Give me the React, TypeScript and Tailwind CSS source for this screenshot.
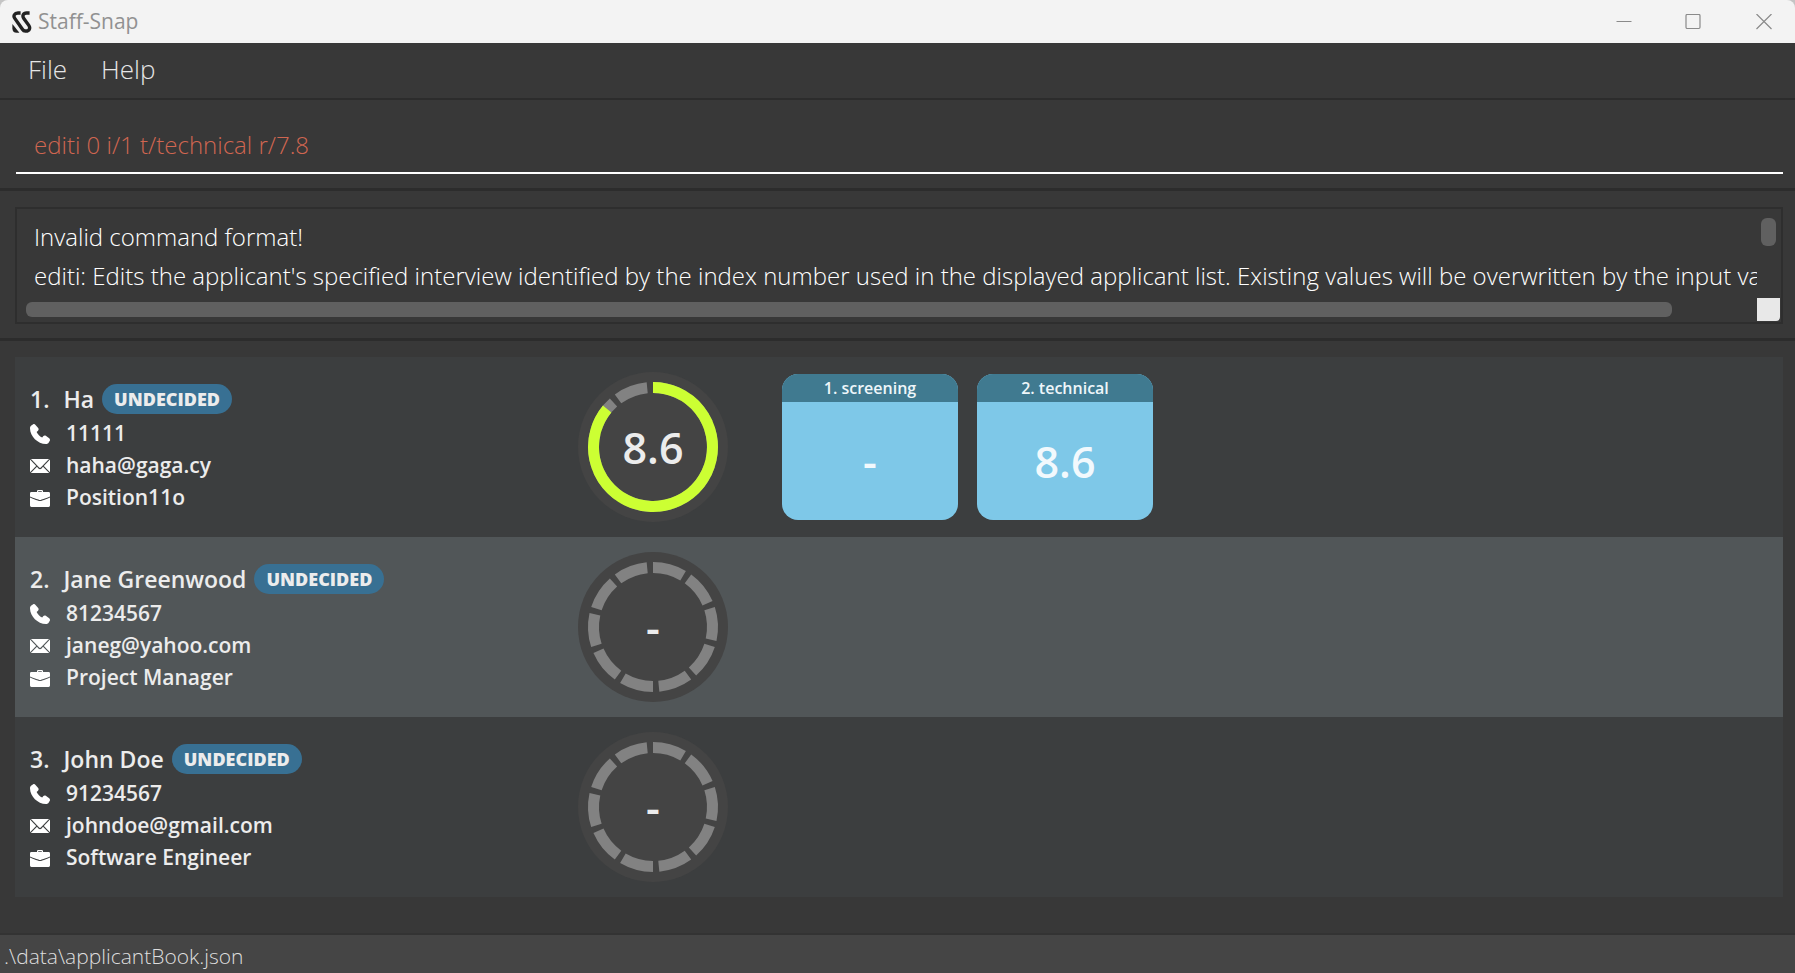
import React from "react";

type Interview = { label: string; rating: string };

type Applicant = {
  name: string;
  phone: string;
  email: string;
  position: string;
  status: string;
  score: number | null;
  interviews: Interview[];
};

const applicants: Applicant[] = [
  {
    name: "Ha",
    phone: "11111",
    email: "haha@gaga.cy",
    position: "Position11o",
    status: "UNDECIDED",
    score: 8.6,
    interviews: [
      { label: "1. screening", rating: "-" },
      { label: "2. technical", rating: "8.6" },
    ],
  },
  {
    name: "Jane Greenwood",
    phone: "81234567",
    email: "janeg@yahoo.com",
    position: "Project Manager",
    status: "UNDECIDED",
    score: null,
    interviews: [],
  },
  {
    name: "John Doe",
    phone: "91234567",
    email: "johndoe@gmail.com",
    position: "Software Engineer",
    status: "UNDECIDED",
    score: null,
    interviews: [],
  },
];

const feedback = [
  "Invalid command format!",
  "editi: Edits the applicant's specified interview identified by the index number used in the displayed applicant list. Existing values will be overwritten by the input values.",
].join("\n");

function Logo() {
  return (
    <svg viewBox="0 0 20 22" className="h-[22px] w-5" fill="none" stroke="#222222" aria-hidden="true">
      <path
        strokeWidth="3.4"
        d="M8.6 2H6C2.4 2 1 4.8 2.8 7.4L10.4 18.2C11.2 19.4 12 20 13.2 20H14C17.4 20 18.6 17 16.8 14.4L11.8 7.4C10 4.8 11.2 2 14.6 2H17.6"
      />
      <path d="M0.4 13L7.4 21.8H4.6C2 21.8 0.4 20 0.4 17.4Z" fill="#222222" stroke="none" />
    </svg>
  );
}

function TitleBar() {
  return (
    <header className="bg-[#c4c4c4]">
      <div className="flex h-[43px] items-center rounded-t-lg bg-[#f3f3f3] pl-3">
        <Logo />
        <h1 className="ml-1.5 flex-1 text-[21px] leading-none text-[#919191]">Staff-Snap</h1>
        <div className="flex h-full text-[#8a8a8a]">
          <button type="button" aria-label="Minimize" className="flex w-[58px] items-center justify-center">
            <svg viewBox="0 0 16 16" className="size-4" fill="none" stroke="currentColor" aria-hidden="true">
              <path d="M0.5 7.5H15.5" />
            </svg>
          </button>
          <button type="button" aria-label="Maximize" className="flex w-20 items-center justify-center">
            <svg viewBox="0 0 16 16" className="size-4" fill="none" stroke="currentColor" strokeWidth="1.2" aria-hidden="true">
              <rect x="1" y="0.5" width="14" height="14" rx="1.2" />
            </svg>
          </button>
          <button type="button" aria-label="Close" className="flex w-[62px] items-center justify-center">
            <svg viewBox="0 0 16 16" className="size-4" fill="none" stroke="currentColor" strokeWidth="1.2" aria-hidden="true">
              <path d="M0.5 0L15.5 15M15.5 0L0.5 15" />
            </svg>
          </button>
        </div>
      </div>
    </header>
  );
}

function PhoneIcon() {
  return (
    <svg viewBox="0 0 20 20" className="size-5" fill="#ffffff" aria-hidden="true">
      <path d="M1 1.8L3.2 0.2C4 -0.2 5 0.1 5.5 0.9L8.2 4C8.9 5 8.7 6.1 8 6.7L6.6 7.9C7.4 9.8 10.2 12.8 12.2 13.5L13.4 12C14 11.4 15 11.3 15.8 11.8L19.2 14.3C20 14.9 20.2 16 19.8 16.8L18.6 18.8C18.2 19.5 17.5 20 16.7 20C7.6 20.2 -0.2 12 0 3.8C0 3 0.4 2.3 1 1.8Z" />
    </svg>
  );
}

function MailIcon() {
  return (
    <svg viewBox="0 0 20 14" className="h-3.5 w-5" fill="#ffffff" aria-hidden="true">
      <path d="M1 0H19L10.8 8.6Q10 9.3 9.2 8.6Z" />
      <path d="M0 0.6L6.2 7L0 13.2Z" />
      <path d="M20 0.6L13.8 7L20 13.2Z" />
      <path d="M0.8 14L7 7.8L8.4 9.4Q10 10.9 11.6 9.4L13 7.8L19.2 14Z" />
    </svg>
  );
}

function BriefcaseIcon() {
  return (
    <svg viewBox="0 0 20 17" className="h-[17px] w-5" fill="#ffffff" aria-hidden="true">
      <path d="M7 2V1.2Q7 0 8.2 0H11.8Q13 0 13 1.2V2H18.6Q20 2 20 3.4V6.6C17 8 14 9 11.6 9.4Q10 10.4 8.4 9.4C6 9 3 8 0 6.6V3.4Q0 2 1.4 2ZM8.2 1.2V2H11.8V1.2Z" />
      <path d="M0 7.6C3 9.1 5.4 10 7.8 10.4Q10 11.8 12.2 10.4C14.6 10 17 9.1 20 7.6V15.6Q20 17 18.6 17H1.4Q0 17 0 15.6Z" />
    </svg>
  );
}

const RING_RADIUS = 59.5;

function arcPath(from: number, to: number) {
  const point = (deg: number) => {
    const a = ((deg - 90) * Math.PI) / 180;
    return `${(75 + RING_RADIUS * Math.cos(a)).toFixed(2)} ${(75 + RING_RADIUS * Math.sin(a)).toFixed(2)}`;
  };
  return `M${point(from)}A${RING_RADIUS} ${RING_RADIUS} 0 ${to - from > 180 ? 1 : 0} 1 ${point(to)}`;
}

function ScoreRing({ score }: { score: number | null }) {
  return (
    <div className="grid size-[150px] shrink-0 place-items-center">
      <svg viewBox="0 0 150 150" className="col-start-1 row-start-1 size-full" fill="none" strokeWidth="11" aria-hidden="true">
        <circle cx="75" cy="75" r="75" fill="#444444" />
        {Array.from({ length: 10 }, (_, i) => (
          <path key={i} d={arcPath(i * 36, i * 36 + 30.4)} stroke="#828282" />
        ))}
        {score !== null && <path d={arcPath(0, score * 36)} stroke="#ccff33" />}
      </svg>
      <span className="col-start-1 row-start-1 text-[43px] leading-none font-semibold text-[#ececec]">
        {score === null ? "-" : score.toFixed(1)}
      </span>
    </div>
  );
}

function InterviewCard({ label, rating }: Interview) {
  return (
    <div className="flex h-[146px] w-44 flex-col overflow-hidden rounded-2xl bg-[#7ec8e8] text-center">
      <h3 className="bg-[#407a90] text-base leading-7 font-semibold text-[#eef6fa]">{label}</h3>
      <p className="flex flex-1 items-center justify-center text-[43px] leading-none font-semibold text-[#f2f9fd]">{rating}</p>
    </div>
  );
}

function Detail({ icon, text }: { icon: React.ReactNode; text: string }) {
  return (
    <div className="flex h-8 items-center gap-4">
      {icon}
      <span>{text}</span>
    </div>
  );
}

function ApplicantRow({ applicant, index }: { applicant: Applicant; index: number }) {
  return (
    <li className="flex items-center bg-[#3c3e3f] py-[15px] pl-[15px] even:bg-[#515658]">
      <div className="w-[548px] shrink-0 pt-1 text-[21px] font-semibold text-[#ececec]">
        <div className="mb-1 flex h-[30px] items-center text-[23px]">
          <span className="mr-3.5">{index}.</span>
          <h2>{applicant.name}</h2>
          <span className="ml-2 h-[30px] rounded-full bg-[#387093] px-3 text-lg leading-[30px] font-extrabold">{applicant.status}</span>
        </div>
        <Detail icon={<PhoneIcon />} text={applicant.phone} />
        <Detail icon={<MailIcon />} text={applicant.email} />
        <Detail icon={<BriefcaseIcon />} text={applicant.position} />
      </div>
      <ScoreRing score={applicant.score} />
      <div className="ml-[54px] flex gap-[19px]">
        {applicant.interviews.map((interview) => (
          <InterviewCard key={interview.label} {...interview} />
        ))}
      </div>
    </li>
  );
}

export default function App() {
  return (
    <div className="flex min-h-screen flex-col bg-[#383838] font-['Open_Sans','Noto_Sans',sans-serif]">
      <TitleBar />

      <nav className="flex h-[57px] items-center gap-[34px] border-b-2 border-[#2c2c2c] pb-0.5 pl-7 text-[26px] font-light text-[#e6e6e6]">
        <button type="button">File</button>
        <button type="button">Help</button>
      </nav>

      <div className="border-b-3 border-[#2c2c2c] pt-[18px] pr-3 pb-3.5 pl-4">
        <input
          type="text"
          aria-label="Command"
          defaultValue="editi 0 i/1 t/technical r/7.8"
          className="block h-14 w-full border-b-2 border-white bg-transparent px-[18px] pb-0.5 text-2xl font-light text-[#d06651] outline-none"
        />
      </div>

      <div className="border-b-3 border-[#2c2c2c] px-3 pt-4 pb-3.5 pl-[15px]">
        <div className="grid grid-cols-[1fr_24px] grid-rows-[88px_25px] border-2 border-[#2e2e2e]">
          <textarea
            readOnly
            wrap="off"
            aria-label="Command result"
            value={feedback}
            className="block size-full resize-none overflow-hidden bg-transparent pt-2 pl-[17px] text-2xl leading-[39px] font-light text-white outline-none"
          />
          <div className="pt-[9px] pl-1">
            <div className="h-7 w-[15px] rounded-md bg-[#606060]" />
          </div>
          <div className="flex items-center pr-[85px] pl-[9px]">
            <div className="h-[15px] w-full rounded-md bg-[#606060]" />
          </div>
          <div className="size-[23px] self-center rounded-br bg-[#e8e8e8]" />
        </div>
      </div>

      <main className="flex-1 pt-4 pr-3 pl-[15px]">
        <ol>
          {applicants.map((applicant, i) => (
            <ApplicantRow key={applicant.name} applicant={applicant} index={i + 1} />
          ))}
        </ol>
      </main>

      <footer className="h-10 border-t-2 border-[#333333] bg-[#454545] pl-1 text-[21px] leading-[43px] font-light text-[#dedede]">
        .\data\applicantBook.json
      </footer>
    </div>
  );
}
